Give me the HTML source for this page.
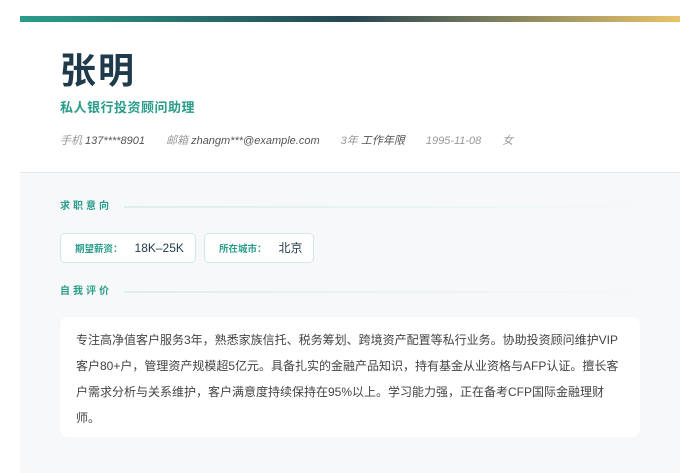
<!DOCTYPE html>
<html><head><meta charset="utf-8"><style>
*{margin:0;padding:0;box-sizing:border-box}
body{width:700px;height:400px;overflow:hidden;background:#fff;font-family:"Liberation Sans","Noto Sans CJK SC",sans-serif;position:relative}
.wrap{position:absolute;left:20px;top:16px;width:660px;height:400px}
.bar{height:6px;background:linear-gradient(90deg,#2a9d8a 0%,#264653 50%,#e9c46a 100%)}
.head{height:151px;background:#fff;position:relative;border-bottom:1px solid #e6eaec}
.name{position:absolute;left:40px;top:26px;font-size:36px;font-weight:bold;color:#1f3a4a;letter-spacing:2px;line-height:46px}
.sub{position:absolute;left:40px;top:77px;font-size:13px;font-weight:bold;color:#2a9d8a;letter-spacing:0.5px;line-height:18px}
.meta{position:absolute;left:40px;top:111px;font-size:11px;font-style:italic;color:#555;line-height:16px;white-space:nowrap}
.meta span{margin-right:21px}
.meta i{color:#999}
.body{background:#f6f8f9;height:300px;position:relative}
.st{position:absolute;left:40px;font-size:10px;font-weight:bold;color:#2a9d8a;letter-spacing:3px;line-height:14px}
.ln{position:absolute;left:104px;width:520px;height:2px;background:linear-gradient(90deg,#dcefed,#f6f8f9)}
.chip{position:absolute;top:60px;height:30px;background:#fff;border:1px solid #cfe9e6;border-radius:5px;font-size:12px;color:#1f3a4a;line-height:28px;padding-left:14px;white-space:nowrap}
.chip b{font-size:9.5px;color:#2a9d8a;margin-right:12px}
.card{position:absolute;left:40px;top:144px;width:580px;height:120px;background:#fff;border-radius:8px;padding:0 16px;font-size:12px;color:#444;line-height:26px;padding-top:10px;white-space:nowrap}
</style></head><body>
<div class="wrap">
<div class="bar"></div>
<div class="head">
<div class="name">张明</div>
<div class="sub">私人银行投资顾问助理</div>
<div class="meta"><span><i>手机</i> 137****8901</span><span><i>邮箱</i> zhangm***@example.com</span><span><i>3年</i> 工作年限</span><span><i>1995-11-08</i></span><span><i>女</i></span></div>
</div>
<div class="body">
<div class="st" style="top:27px">求职意向</div><div class="ln" style="top:33px"></div>
<div class="chip" style="left:40px;width:136px"><b>期望薪资：</b>18K–25K</div>
<div class="chip" style="left:184px;width:110px"><b>所在城市：</b>北京</div>
<div class="st" style="top:112px">自我评价</div><div class="ln" style="top:118px"></div>
<div class="card">专注高净值客户服务3年，熟悉家族信托、税务筹划、跨境资产配置等私行业务。协助投资顾问维护VIP<br>客户80+户，管理资产规模超5亿元。具备扎实的金融产品知识，持有基金从业资格与AFP认证。擅长客<br>户需求分析与关系维护，客户满意度持续保持在95%以上。学习能力强，正在备考CFP国际金融理财<br>师。</div>
</div>
</div>
</body></html>
